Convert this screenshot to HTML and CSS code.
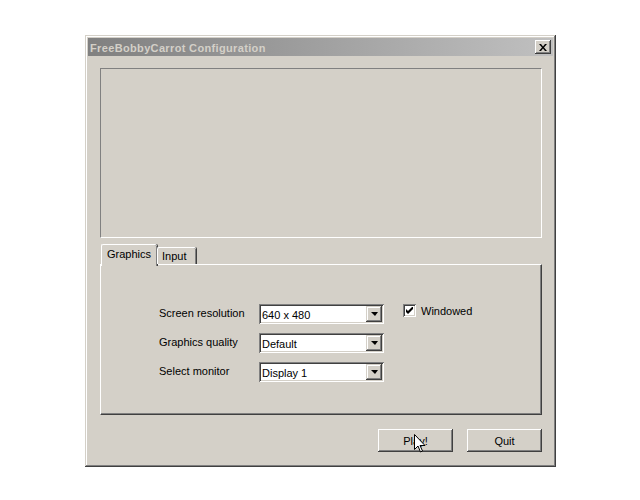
FILE: index.html
```html
<!DOCTYPE html>
<html lang="en">
<head>
    <meta charset="UTF-8">
    <title>FreeBobbyCarrot Configuration</title>
    <link rel="stylesheet" href="styles.css">
</head>
<body>

    <div class="window">
        <div class="titlebar">
            <span class="title">FreeBobbyCarrot Configuration</span>
            <span class="close-btn">
                <svg width="8" height="7" viewBox="0 0 8 7">
                    <path d="M0 0h2l2 2.5 2-2.5h2l-3 3.5 3 3.5h-2l-2-2.5-2 2.5h-2l3-3.5z" fill="#000"/>
                </svg>
            </span>
        </div>

        <div class="content">
            <div class="preview"></div>

            <div class="tabs">
                <div class="tab active">Graphics</div>
                <div class="tab">Input</div>
            </div>
            <div class="tab-panel">
                <div class="settings">
                    <label class="label">Screen resolution</label>
                    <div class="select">
                        <span class="value">640 x 480</span>
                        <span class="drop-btn"><span class="arrow"></span></span>
                    </div>
                    <label class="check">
                        <span class="checkbox">
                            <svg width="7" height="7" viewBox="0 0 7 7">
                                <path d="M0 2v3l2 2 5-5v-3l-5 5z" fill="#000"/>
                            </svg>
                        </span>
                        Windowed
                    </label>

                    <label class="label">Graphics quality</label>
                    <div class="select">
                        <span class="value">Default</span>
                        <span class="drop-btn"><span class="arrow"></span></span>
                    </div>
                    <span></span>

                    <label class="label">Select monitor</label>
                    <div class="select">
                        <span class="value">Display 1</span>
                        <span class="drop-btn"><span class="arrow"></span></span>
                    </div>
                    <span></span>
                </div>
            </div>

            <div class="buttons">
                <button class="btn">Play!
                    <svg class="cursor" width="12" height="20" viewBox="0 0 12 20">
                        <path d="M0.5 0.5v15l3.5-3.5 2.5 6 2-1-2.5-5.5h5z" fill="#fff" stroke="#000" stroke-width="1"/>
                    </svg>
                </button>
                <button class="btn">Quit</button>
            </div>
        </div>
    </div>

</body>
</html>
```

FILE: styles.css
```css
/* Reset */
* {
    margin: 0;
    padding: 0;
    box-sizing: border-box;
}

body {
    background-color: #fff;
    font-family: 'Liberation Sans', Arial, sans-serif;
    font-size: 11px;
    color: #000;
}

/* Window frame */
.window {
    width: 471px;
    height: 432px;
    margin: 35px 0 0 85px;
    padding: 3px;
    background-color: #d4d0c8;
    box-shadow: inset -1px -1px #404040, inset 1px 1px #d4d0c8,
                inset -2px -2px #808080, inset 2px 2px #fff;
}

.titlebar {
    height: 18px;
    display: flex;
    align-items: center;
    justify-content: space-between;
    padding: 1px 2px 0 2px;
    background: linear-gradient(to right, #808080, #c0c0c0);
}

.title {
    color: #d4d0c8;
    font-weight: bold;
    font-size: 11px;
    letter-spacing: 0.35px;
}

.close-btn {
    width: 16px;
    height: 14px;
    margin-top: -1px;
    display: flex;
    align-items: center;
    justify-content: center;
    background-color: #d4d0c8;
    box-shadow: inset -1px -1px #404040, inset 1px 1px #fff,
                inset -2px -2px #808080;
}

.content {
    padding: 12px 11px 0 12px;
}

/* Sunken preview area */
.preview {
    height: 170px;
    border: 1px solid;
    border-color: #808080 #fff #fff #808080;
}

/* Tabs */
.tabs {
    display: flex;
    align-items: flex-end;
    height: 20px;
    margin-top: 6px;
    padding-left: 1px;
    position: relative;
    z-index: 1;
}

.tab {
    height: 17px;
    padding: 2px 9px 0 4px;
    border-top: 1px solid #fff;
    border-left: 1px solid #fff;
    box-shadow: inset -1px 0 #808080, 1px 0 #404040;
    border-radius: 2px 2px 0 0;
}

.tab.active {
    height: 22px;
    margin-bottom: -2px;
    padding: 3px 6px 0 5px;
    background-color: #d4d0c8;
}

.tab-panel {
    height: 151px;
    border: 1px solid;
    border-color: #fff #404040 #404040 #fff;
    box-shadow: inset -1px -1px #808080;
    padding: 39px 0 0 58px;
}

.settings {
    display: grid;
    grid-template-columns: 100px 125px auto;
    row-gap: 9px;
    align-items: center;
}

.label {
    margin-top: -2px;
}

/* Combo boxes */
.select {
    height: 20px;
    display: flex;
    align-items: center;
    justify-content: space-between;
    padding: 2px;
    background-color: #fff;
    box-shadow: inset 1px 1px #808080, inset -1px -1px #fff,
                inset 2px 2px #404040, inset -2px -2px #d4d0c8;
}

.value {
    padding-left: 1px;
    padding-top: 1px;
}

.drop-btn {
    width: 16px;
    height: 16px;
    display: flex;
    align-items: center;
    justify-content: center;
    background-color: #d4d0c8;
    box-shadow: inset -1px -1px #404040, inset 1px 1px #d4d0c8,
                inset -2px -2px #808080, inset 2px 2px #fff;
}

.arrow {
    width: 0;
    height: 0;
    border-left: 4px solid transparent;
    border-right: 3px solid transparent;
    border-top: 4px solid #000;
}

/* Checkbox */
.check {
    display: flex;
    align-items: center;
    gap: 5px;
    align-self: start;
    margin: 0 0 0 19px;
}

.checkbox {
    width: 13px;
    height: 13px;
    display: flex;
    align-items: center;
    justify-content: center;
    background-color: #fff;
    box-shadow: inset 1px 1px #808080, inset -1px -1px #fff,
                inset 2px 2px #404040, inset -2px -2px #d4d0c8;
}

/* Buttons */
.buttons {
    display: flex;
    justify-content: flex-end;
    gap: 14px;
    margin-top: 14px;
}

.btn {
    position: relative;
    width: 75px;
    height: 23px;
    border: none;
    background-color: #d4d0c8;
    font-family: 'Liberation Sans', Arial, sans-serif;
    font-size: 11px;
    color: #000;
    box-shadow: inset -1px -1px #404040, inset 1px 1px #fff,
                inset -2px -2px #808080, inset 2px 2px #d4d0c8;
}

.cursor {
    position: absolute;
    left: 36px;
    top: 5px;
}
```
